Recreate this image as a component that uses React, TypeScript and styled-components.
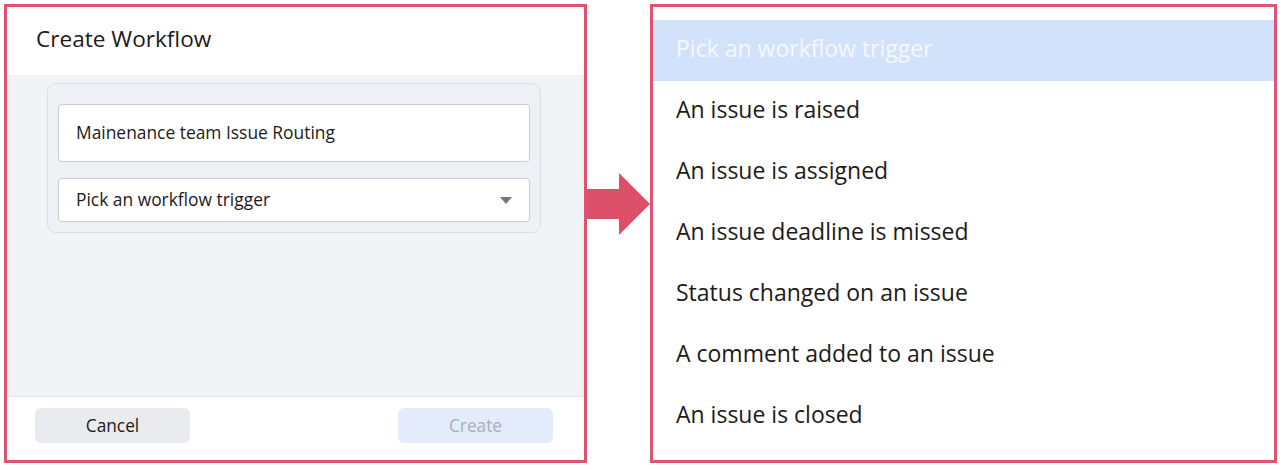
import React from "react";
import styled, { createGlobalStyle } from "styled-components";

const GlobalStyle = createGlobalStyle`
  html, body {
    margin: 0;
    padding: 0;
    background: #ffffff;
  }
  body {
    font-family: "Open Sans", "Noto Sans", sans-serif;
    color: #1d1a1a;
  }
  * {
    box-sizing: border-box;
  }
`;

const Page = styled.div`
  display: flex;
  align-items: flex-start;
  padding: 4px 0 0 4px;
  width: 1282px;
  height: 470px;
`;

/* left : create workflow modal */
const Modal = styled.div`
  width: 583px;
  height: 459px;
  border: 3px solid #de5470;
  display: flex;
  flex-direction: column;
  background: #fff;
`;

const ModalHeader = styled.div`
  height: 69px;
  display: flex;
  align-items: center;
  padding: 0 0 5px 29px;
  background: #fff;
  border-bottom: 1px solid #eceef2;
`;

const Title = styled.h1`
  margin: 0;
  font-size: 22.6px;
  font-weight: 400;
  color: #1d1a1a;
`;

const ModalBody = styled.div`
  flex: 1;
  background: #f2f3f7;
  padding: 7px 0 0 40px;
  border-bottom: 1px solid #e3e5ea;
`;

const FieldCard = styled.div`
  width: 494px;
  padding: 20px 10px 10px 10px;
  background: #eef0f5;
  border: 1px solid #dcdfe5;
  border-radius: 9px;
  display: flex;
  flex-direction: column;
  gap: 16px;
`;

const Field = styled.div<{ $tall?: boolean }>`
  height: ${(p) => (p.$tall ? "58px" : "44px")};
  background: #fff;
  border: 1px solid #c9ccd3;
  border-radius: 4px;
  display: flex;
  align-items: center;
  justify-content: space-between;
  padding: 0 17px 2px 17px;
  font-size: 17.4px;
  color: #1d1a1a;
`;

const Caret = styled.span`
  width: 0;
  height: 0;
  margin-top: 2px;
  border-left: 6px solid transparent;
  border-right: 6px solid transparent;
  border-top: 7px solid #767676;
`;

const ModalFooter = styled.div`
  height: 63px;
  display: flex;
  justify-content: space-between;
  align-items: flex-start;
  padding: 11px 31px 0 28px;
  background: #fff;
`;

const FooterButton = styled.button<{ $primary?: boolean }>`
  width: 155px;
  height: 35px;
  padding: 0 0 1px;
  border: none;
  border-radius: 6px;
  font-family: inherit;
  font-size: 17.3px;
  background: ${(p) => (p.$primary ? "#e4ebfa" : "#eaebef")};
  color: ${(p) => (p.$primary ? "#a9afbd" : "#1d1a1a")};
  cursor: pointer;
`;

/* middle : arrow */
const ArrowWrap = styled.div`
  width: 63px;
  margin-top: 169px;
  display: flex;
`;

/* right : trigger options list */
const OptionList = styled.ul`
  width: 627px;
  height: 459px;
  margin: 0;
  padding: 13px 0 0 0;
  list-style: none;
  border: 3px solid #de5470;
  background: #fff;
`;

const Option = styled.li<{ $active?: boolean }>`
  height: 61px;
  display: flex;
  align-items: center;
  padding: 0 0 6px 23px;
  font-size: 23px;
  background: ${(p) => (p.$active ? "#d2e2fb" : "transparent")};
  color: ${(p) => (p.$active ? "#f5f8fe" : "#1d1a1a")};
`;

const triggers = [
  "An issue is raised",
  "An issue is assigned",
  "An issue deadline is missed",
  "Status changed on an issue",
  "A comment added to an issue",
  "An issue is closed",
];

export default function App() {
  return (
    <>
      <GlobalStyle />
      <Page>
        <Modal>
          <ModalHeader>
            <Title>Create Workflow</Title>
          </ModalHeader>
          <ModalBody>
            <FieldCard>
              <Field $tall>Mainenance team Issue Routing</Field>
              <Field>
                Pick an workflow trigger
                <Caret />
              </Field>
            </FieldCard>
          </ModalBody>
          <ModalFooter>
            <FooterButton>Cancel</FooterButton>
            <FooterButton $primary>Create</FooterButton>
          </ModalFooter>
        </Modal>

        <ArrowWrap>
          <svg width="63" height="62" viewBox="0 0 63 62">
            <path d="M0 16 H32 V0 L63 31 L32 62 V46 H0 Z" fill="#dc4f69" />
          </svg>
        </ArrowWrap>

        <OptionList>
          <Option $active>Pick an workflow trigger</Option>
          {triggers.map((t) => (
            <Option key={t}>{t}</Option>
          ))}
        </OptionList>
      </Page>
    </>
  );
}
